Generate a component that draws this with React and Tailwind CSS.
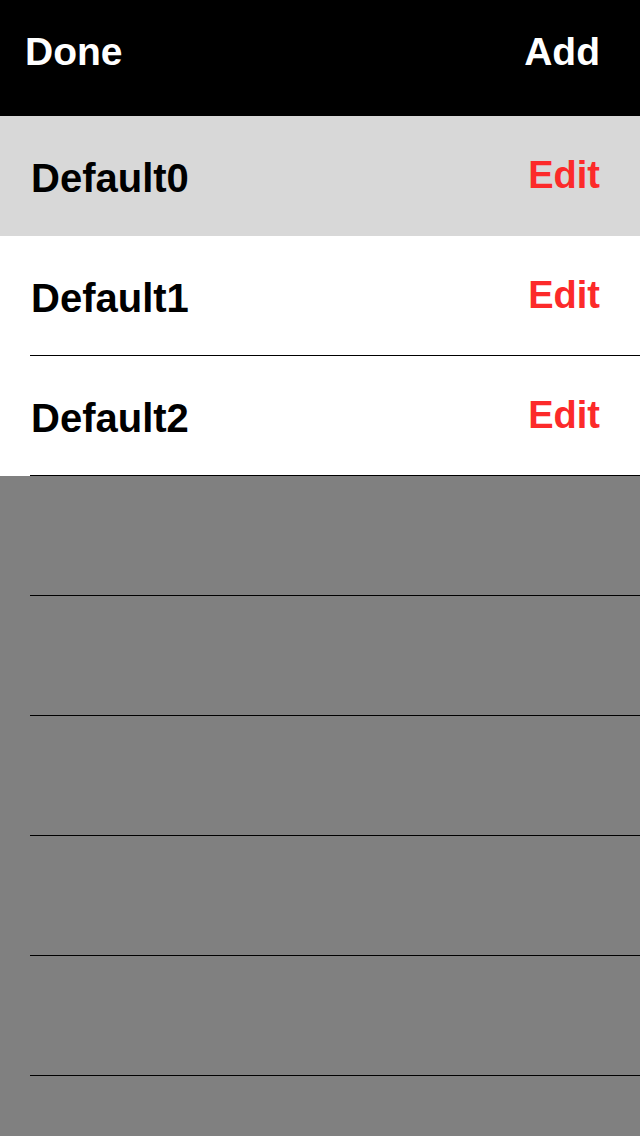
import React from 'react';

const rows = ['Default0', 'Default1', 'Default2'];
const empty = [0, 1, 2, 3, 4, 5];

export default function App() {
  return (
    <div className="w-[640px] h-[1136px] bg-[#808080] overflow-hidden font-['Liberation_Sans',Arial,sans-serif] font-bold">
      {/* Header */}
      <div className="h-[116px] bg-black flex items-center justify-between pl-[25px] pr-[40px] text-white text-[39px] pb-[12px]">
        <span>Done</span>
        <span>Add</span>
      </div>

      {/* Rows */}
      {rows.map((name, i) => (
        <div key={name} className={i === 0 ? 'bg-[#d8d8d8]' : 'bg-white'}>
          <div className="h-[119px] flex items-center justify-between pl-[31px] pr-[40px]">
            <span className="text-black text-[40px] mt-[4px]">{name}</span>
            <span className="text-[#fc2a2a] text-[38px]">Edit</span>
          </div>
          <div className={i === 0 ? 'h-px ml-[30px]' : 'h-px ml-[30px] bg-black'} />
        </div>
      ))}

      {/* Empty rows */}
      {empty.map((n) => (
        <div key={n}>
          <div className="h-[119px]" />
          <div className="h-px ml-[30px] bg-black" />
        </div>
      ))}
    </div>
  );
}
